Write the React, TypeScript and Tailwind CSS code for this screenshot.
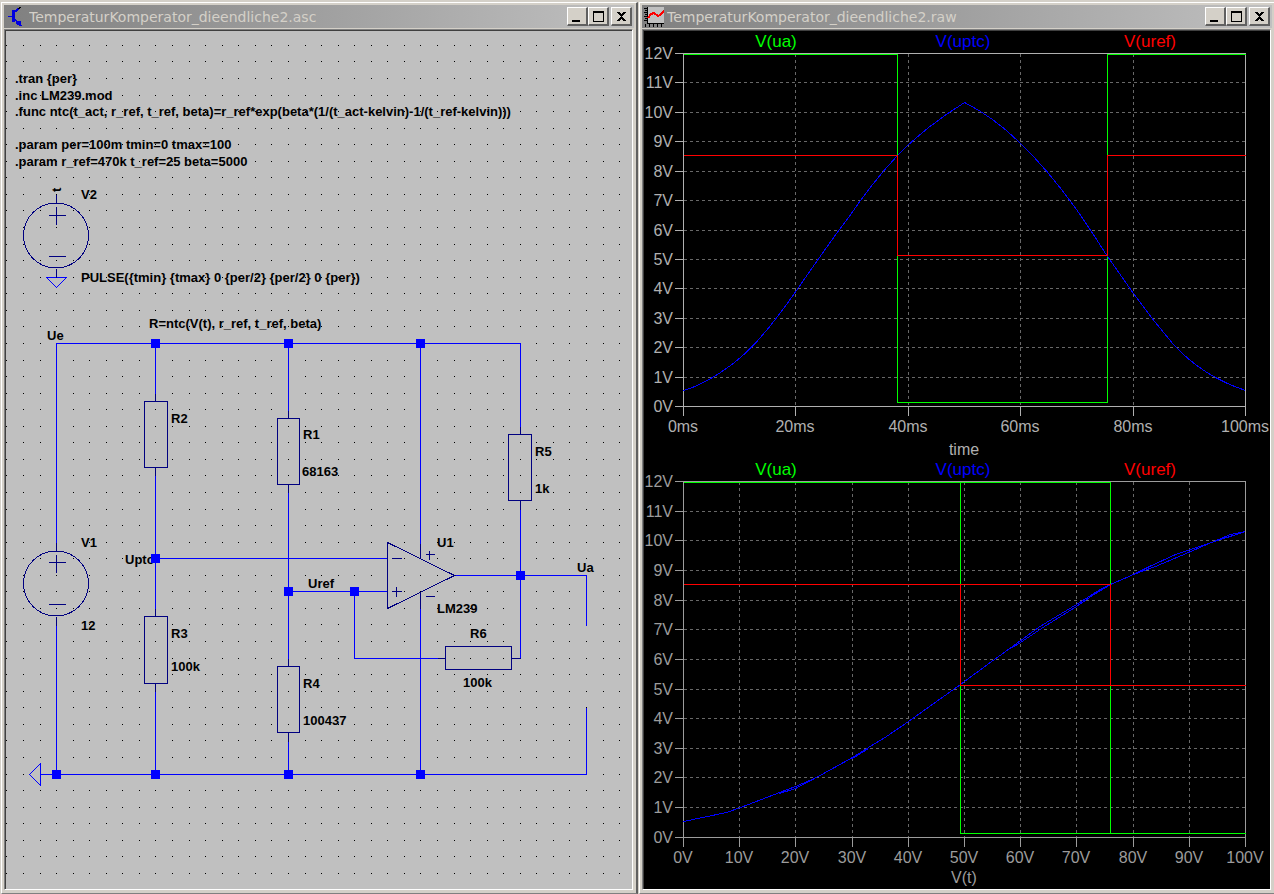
import type { ReactNode } from 'react';

type Point = [number, number];

const GRID = 16.56;

const gridDots = (() => {
  let d = '';
  for (let col = -3; col <= 34; col++) {
    for (let row = 0; row <= 50; row++) {
      d += `M${Math.floor(56.6 + col * GRID)} ${Math.floor(45.36 + row * GRID)}h1v1h-1z`;
    }
  }
  return d;
})();

function WindowButton({ label, children }: { label: string; children: ReactNode }) {
  return (
    <button
      type="button"
      aria-label={label}
      className="flex h-[19px] w-[21px] items-center justify-center border-t border-l border-r-2 border-b-2 border-t-white border-l-white border-r-[#606060] border-b-[#606060] bg-[#d4d0c8]"
    >
      <svg width="14" height="14" viewBox="0 0 14 14" shapeRendering="crispEdges" aria-hidden="true">
        {children}
      </svg>
    </button>
  );
}

function Window({ title, icon, children }: { title: string; icon: ReactNode; children: ReactNode }) {
  return (
    <section className="flex w-[calc(50%+1px)] flex-none flex-col pt-0.5 pl-px">
      <div className="flex min-h-0 flex-1 flex-col border-t border-r-2 border-b border-l border-t-white border-r-[#606060] border-b-[#808080] border-l-white px-0.5 pt-0.5 pb-[3px]">
        <header className="flex h-[23px] flex-none items-center bg-linear-to-r from-[#808080] to-[#c0c0c0] pr-0.5">
          {icon}
          <h1 className="flex-1 truncate font-['DejaVu_Sans',sans-serif] text-[14px] leading-[22px] text-[#d4d0c8]">
            {title}
          </h1>
          <WindowButton label="Minimize">
            <path d="M2 11h8v2h-8z" />
          </WindowButton>
          <WindowButton label="Maximize">
            <path fillRule="evenodd" d="M2 2h11v11h-11zM3 4v8h9v-8z" />
          </WindowButton>
          <div className="ml-0.5 flex">
            <WindowButton label="Close">
              <path d="M3 3h3v1h1v1h1v-1h1v-1h3v1h-1v1h-1v1h-1v1h-1v1h1v1h1v1h1v1h1v1h-3v-1h-1v-1h-1v1h-1v1h-3v-1h1v-1h1v-1h1v-1h1v-1h-1v-1h-1v-1h-1v-1h-1z" />
            </WindowButton>
          </div>
        </header>
        <div className="mt-px mr-px flex min-h-0 flex-1 flex-col border-t border-r border-b border-l border-t-[#808080] border-r-white border-b-white border-l-[#808080]">
          <div className="min-h-0 flex-1 overflow-hidden border-t border-l border-[#404040]">{children}</div>
        </div>
      </div>
    </section>
  );
}

const nodes: Point[] = [
  [155, 343], [288, 343], [420, 343], [155, 558], [288, 591], [354, 591],
  [520, 575], [56, 774], [155, 774], [288, 774], [420, 774],
];

const schematicTexts: [number, number, string][] = [
  [15, 83, '.tran {per}'],
  [15, 100, '.inc LM239.mod'],
  [15, 116, '.func ntc(t_act, r_ref, t_ref, beta)=r_ref*exp(beta*(1/(t_act-kelvin)-1/(t_ref-kelvin)))'],
  [15, 149, '.param per=100m tmin=0 tmax=100'],
  [15, 166, '.param r_ref=470k t_ref=25 beta=5000'],
  [81, 199, 'V2'],
  [81, 282, 'PULSE({tmin} {tmax} 0 {per/2} {per/2} 0 {per})'],
  [149, 328, 'R=ntc(V(t), r_ref, t_ref, beta)'],
  [47, 340, 'Ue'],
  [171, 423, 'R2'],
  [303, 439, 'R1'],
  [302, 476, '68163'],
  [535, 456, 'R5'],
  [535, 493, '1k'],
  [81, 547, 'V1'],
  [125, 564, 'Uptc'],
  [437, 547, 'U1'],
  [577, 572, 'Ua'],
  [308, 588, 'Uref'],
  [437, 613, 'LM239'],
  [81, 630, '12'],
  [171, 638, 'R3'],
  [470, 638, 'R6'],
  [171, 671, '100k'],
  [463, 687, '100k'],
  [303, 688, 'R4'],
  [303, 725, '100437'],
];

function Schematic() {
  return (
    <svg className="block h-full w-full bg-[#c0c0c0]" role="img" aria-label="Comparator schematic">
      <g transform="translate(-6 -31)">
        <path d={gridDots} fill="#000" shapeRendering="crispEdges" />
        <g transform="translate(0.5 0.5)" fill="none" shapeRendering="crispEdges">
          <path
            stroke="#0000ff"
            d="M56 550V343H520V434M155 343V401M155 467V616M155 683V774M288 343V418M288 484V666M288 732V774M420 343V558M420 592V774M56 616V774M40 774H586V707M155 558H387M288 591H387M354 591V658H445M511 658H520V500M454 575H586V625M46 277H66L56 287ZM40 763V785L29 774Z"
          />
          <path
            stroke="#000080"
            d="M56 194V202M48 215H65M56 206V224M48 256H65M56 268V277M56 542V550M48 562H65M56 554V572M48 604H65M56 616V625M155 393V401M144 401H167V467H144ZM155 467V475M155 608V616M144 616H167V683H144ZM155 683V691M288 410V418M277 418H299V484H277ZM288 484V492M288 658V666M277 666H299V732H277ZM288 732V741M520 426V434M508 434H531V500H508ZM520 500V509M437 658H445M445 646H511V669H445ZM511 658H520M387 542V608L454 575ZM391 558H401M391 591H401M396 586V596M420 543V558M420 592V608M425 554H434M429 550V559M425 596H434"
          />
          <circle cx="55.500" cy="235" r="32.500" stroke="#000080" />
          <circle cx="55.500" cy="583" r="32.500" stroke="#000080" />
        </g>
        <g className="font-['Liberation_Sans',Arial,sans-serif] text-[13px] font-bold" fill="#000">
          {schematicTexts.map(([x, y, text]) => (
            <text key={`${x}-${y}`} x={x} y={y}>
              {text}
            </text>
          ))}
          <text transform="translate(61 192) rotate(-90)">t</text>
        </g>
        {nodes.map(([x, y]) => (
          <rect key={`${x}-${y}`} x={x - 4} y={y - 4} width="9" height="9" fill="#0000ff" />
        ))}
      </g>
    </svg>
  );
}

interface Plot {
  rows: number[];
  columns: number[];
  columnLabels: string[];
  axis: string;
  legendY: number;
  axisTitle: string;
  green: string;
  red: string;
  blue: string;
}

const LEFT = 683;
const RIGHT = 1245;

const timePlot: Plot = {
  rows: [53, 82, 112, 141, 171, 200, 230, 259, 288, 318, 347, 377, 406],
  columns: [683, 795, 908, 1020, 1133, 1245],
  columnLabels: ['0ms', '20ms', '40ms', '60ms', '80ms', '100ms'],
  axis: '#b0b0b0',
  legendY: 47,
  axisTitle: 'time',
  green: 'M683 54H897V402H1107V54H1245',
  red: 'M683 155H897V255H1107V155H1245',
  blue: 'M683 390C698 386 720 374 740 357C760 340 778 316 796 290C816 261 834 235 848 217C863 195 880 173 897 155C917 134 940 117 964 102C986 113 1003 126 1020 143C1042 164 1060 187 1073 205C1085 221 1096 239 1107 256L1133 293C1148 314 1161 330 1173 344C1194 367 1218 381 1245 390',
};

const sweepPlot: Plot = {
  rows: [481, 511, 540, 570, 600, 629, 659, 689, 718, 748, 777, 807, 837],
  columns: [683, 739, 795, 852, 908, 964, 1020, 1076, 1133, 1189, 1245],
  columnLabels: ['0V', '10V', '20V', '30V', '40V', '50V', '60V', '70V', '80V', '90V', '100V'],
  axis: '#9c9c9c',
  legendY: 475,
  axisTitle: 'V(t)',
  green: 'M683 482H1110V833M960 482V833H1245',
  red: 'M683 584H1110V685M960 584V685H1245',
  blue: 'M683 821L726 812L740 807L761 799L779 792L795 786L814 778L834 767L852 757L868 747L886 736L908 721L929 706L960 684L987 664L1012 646L1038 627L1046 622L1076 604L1098 590L1110 584L1133 574L1149 566L1175 554L1211 542L1230 534L1245 531M779 793L795 788L814 778M852 758L868 748M1012 647L1020 642L1044 626L1076 606L1092 595L1110 584M1133 574L1155 566L1181 555L1211 542L1245 531',
};

function PlotPane({ plot }: { plot: Plot }) {
  const top = plot.rows[0];
  const bottom = plot.rows[12];
  const legend: [number, string, string][] = [
    [776, 'V(ua)', '#00ff00'],
    [963, 'V(uptc)', '#0000ff'],
    [1150, 'V(uref)', '#ff0000'],
  ];
  return (
    <g>
      <g transform="translate(0.5 0.5)" fill="none" shapeRendering="crispEdges">
        <path
          stroke="#686868"
          strokeDasharray="3 3"
          d={
            plot.rows.slice(1, 12).map((y) => `M${LEFT} ${y}H${RIGHT}`).join('') +
            plot.columns.slice(1, -1).map((x) => `M${x} ${top}V${bottom}`).join('')
          }
        />
        <path
          stroke={plot.axis}
          d={
            `M${LEFT} ${top}H${RIGHT}V${bottom}H${LEFT}Z` +
            plot.rows.map((y) => `M${LEFT - 9} ${y}H${LEFT}`).join('') +
            plot.columns.map((x) => `M${x} ${bottom}V${bottom + 9}`).join('')
          }
        />
        <path stroke="#00ff00" d={plot.green} />
        <path stroke="#0000ff" d={plot.blue} />
        <path stroke="#ff0000" d={plot.red} />
      </g>
      <g className="font-['Liberation_Sans',Arial,sans-serif] text-[16px]" fill={plot.axis}>
        {plot.rows.map((y, i) => (
          <text key={y} x={673} y={y + 6} textAnchor="end">
            {`${12 - i}V`}
          </text>
        ))}
        {plot.columns.map((x, i) => (
          <text key={x} x={x} y={bottom + 26} textAnchor="middle">
            {plot.columnLabels[i]}
          </text>
        ))}
        <text x={964} y={plot.axisTitle === 'time' ? 455 : 883} textAnchor="middle">
          {plot.axisTitle}
        </text>
      </g>
      <g className="font-['Liberation_Sans',Arial,sans-serif] text-[17px]">
        {legend.map(([x, text, color]) => (
          <text key={text} x={x} y={plot.legendY} fill={color} textAnchor="middle">
            {text}
          </text>
        ))}
      </g>
    </g>
  );
}

const transistorIcon = (
  <svg className="mr-0.5 ml-1 flex-none" width="19" height="22" viewBox="8 5 19 22" shapeRendering="crispEdges" aria-hidden="true">
    <path d="M12 9h3v12h-3zM8 15h4v1h-4z" fill="#0000e0" />
    <path d="M15 11L18 8M15 18L21 25" stroke="#0000e0" strokeWidth="1.500" />
    <path d="M18 8L21 6" stroke="#000" />
    <path d="M17 20l4 0v2l1 3h-2l-4-2z" fill="#0000e0" />
  </svg>
);

const waveIcon = (
  <svg className="mr-[3px] ml-0.5 flex-none" width="20" height="22" viewBox="644 5 20 22" shapeRendering="crispEdges" aria-hidden="true">
    <path d="M648 6h16v16h-16z" fill="#c0c0c0" />
    <path
      d="M647 6h1v16h16v1h-17zM644 7h3v1h-3zM644 11h3v1h-3zM644 15h3v1h-3zM644 19h3v1h-3zM645 23h1v3h-1zM649 23h1v3h-1zM653 23h1v3h-1zM657 23h1v3h-1zM661 23h1v3h-1zM645 9h2v1h-2zM645 13h2v1h-2zM645 17h2v1h-2z"
      fill="#000"
    />
    <path d="M648 17L651 13L654 12L658 15L660 14L664 10" fill="none" stroke="#ff0000" strokeWidth="2" />
  </svg>
);

export default function App() {
  return (
    <main className="flex h-screen overflow-hidden bg-[#d4d0c8]">
      <Window title="TemperaturKomperator_dieendliche2.asc" icon={transistorIcon}>
        <Schematic />
      </Window>
      <Window title="TemperaturKomperator_dieendliche2.raw" icon={waveIcon}>
        <svg className="block h-full w-full bg-black" role="img" aria-label="Simulation waveforms">
          <g transform="translate(-644 -31)">
            <PlotPane plot={timePlot} />
            <PlotPane plot={sweepPlot} />
          </g>
        </svg>
      </Window>
    </main>
  );
}
